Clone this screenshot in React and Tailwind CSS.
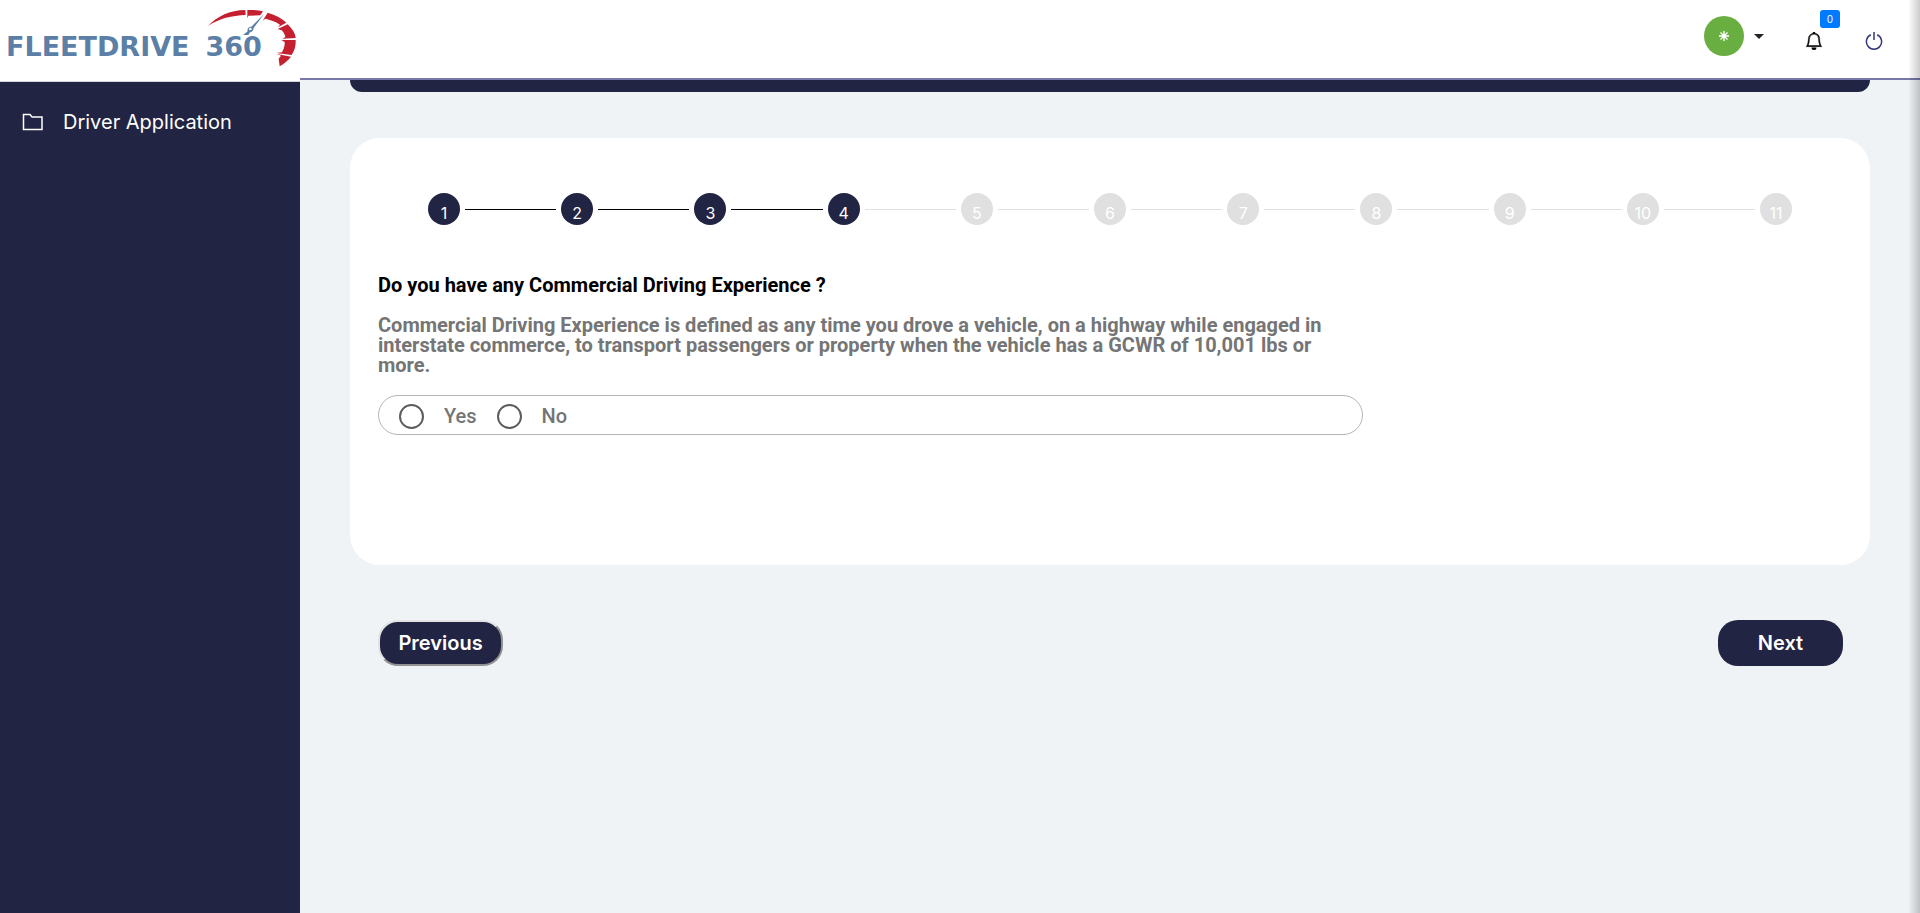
import React, { useState } from "react";
import { BsBell } from "react-icons/bs";

const STEPS = [1, 2, 3, 4, 5, 6, 7, 8, 9, 10, 11];
const CURRENT_STEP = 4;

function Logo() {
  return (
    <a href="#home" aria-label="FleetDrive 360" className="relative block h-[82px] border-b border-[#d3d3da] bg-white">
      <span className="flex gap-4 pt-[33px] pl-[6px] font-['DejaVu_Sans'] text-[27px] leading-7 font-bold whitespace-nowrap text-[#5b7fa6]">
        <span>FLEETDRIVE</span>
        <span>360</span>
      </span>
      <svg className="absolute top-0 left-[200px]" width="100" height="75" viewBox="0 0 300 225" aria-hidden="true">
        <g fill="#c4202f">
          <path d="M24 78 C52 48 90 31 136 30 L137 45 C96 47 58 55 24 78 Z" />
          <path d="M142 30 C160 29 176 31 189 34 L181 46 L145 47 L142 55 Z" />
          <path d="M203 38 C228 45 246 55 259 68 L234 82 L240 74 C226 64 210 60 196 56 L188 62 Z" />
          <path d="M263 73 C277 87 286 100 287 114 L247 116 L256 111 C254 102 250 96 245 91 L233 87 Z" />
          <path d="M287 120 C288 137 284 152 275 165 L229 159 L246 157 C253 145 255 133 254 126 L244 120 Z" />
          <path d="M273 170 C263 183 251 191 239 199 L236 176 L243 167 L231 162 Z" />
        </g>
        <path d="M193 41 L161 84 C161 92 155 96 150 97 L145 105 H129 L143 94 C140 86 147 79 154 80 Z" fill="#5b7fa6" />
        <circle cx="151" cy="87" r="4" fill="#fff" />
      </svg>
    </a>
  );
}

function Sidebar() {
  return (
    <aside className="flex w-[300px] shrink-0 flex-col bg-[#212443]">
      <Logo />
      <nav className="pt-6">
        <a href="#driver-application" className="flex h-8 items-center gap-5 pl-[22px] text-xl text-white">
          <svg width="21" height="18" viewBox="0 0 21 18" fill="none" stroke="currentColor" strokeWidth="1.5" aria-hidden="true">
            <path d="M1.5 1.5 H8 L10 4 H20 V16.5 H1.5 Z" />
          </svg>
          Driver Application
        </a>
      </nav>
    </aside>
  );
}

function Header() {
  return (
    <header className="flex h-20 items-start justify-end border-b-2 border-[#7878a8] bg-white pr-[37px]">
      <button type="button" aria-label="Account menu" className="mt-4 flex items-center gap-2.5">
        <span className="flex size-10 items-center justify-center rounded-full bg-[#69ae41] text-white">
          <svg width="10" height="10" viewBox="0 0 10 10" stroke="currentColor" strokeWidth="1.4" aria-hidden="true">
            <path d="M5 0 V10 M0 5 H10 M1.5 1.5 L8.5 8.5 M8.5 1.5 L1.5 8.5" />
          </svg>
        </span>
        <svg width="10" height="5" viewBox="0 0 10 5" aria-hidden="true">
          <path d="M0 0 H10 L5 5 Z" fill="#212529" />
        </svg>
      </button>
      <button type="button" aria-label="Notifications" className="relative mt-8 ml-[41px] text-black">
        <BsBell size={18} stroke="currentColor" strokeWidth={0.4} />
        <span className="absolute -top-[22px] left-[15px] flex h-[18px] w-5 items-center justify-center rounded-[3px] bg-[#007bff] text-[10px] text-white">
          0
        </span>
      </button>
      <button type="button" aria-label="Sign out" className="mt-8 ml-[42px] text-[#36367c]">
        <svg width="18" height="18" viewBox="0 0 18 18" fill="none" stroke="currentColor" strokeWidth="1.5" aria-hidden="true">
          <path d="M9 0 V8 M5.8 2.7 A7.6 7.6 0 1 0 12.2 2.7" />
        </svg>
      </button>
    </header>
  );
}

function Stepper() {
  return (
    <ol className="flex items-center px-[50px]">
      {STEPS.map((step, i) => (
        <li key={step} className={i < STEPS.length - 1 ? "flex flex-1 items-center" : "flex items-center"}>
          <span
            className={
              "flex size-8 shrink-0 items-center justify-center rounded-full pt-2 text-base leading-6 text-white " +
              (step <= CURRENT_STEP ? "bg-[#212443]" : "bg-[#e0e0e0]")
            }
          >
            {step}
          </span>
          {i < STEPS.length - 1 && (
            <span className={"mx-[5px] h-px flex-1 " + (step < CURRENT_STEP ? "bg-black" : "bg-[#e0e0e0]")} />
          )}
        </li>
      ))}
    </ol>
  );
}

function Question() {
  const [answer, setAnswer] = useState("");
  return (
    <fieldset className="mt-[50px] max-w-[985px] font-[Roboto,sans-serif] text-xl leading-5">
      <legend className="font-bold text-black">Do you have any Commercial Driving Experience ?</legend>
      <p className="mt-5 font-bold text-[#757575]">
        Commercial Driving Experience is defined as any time you drove a vehicle, on a highway while engaged in
        interstate commerce, to transport passengers or property when the vehicle has a GCWR of 10,001 lbs or more.
      </p>
      <div className="mt-5 flex h-10 items-center gap-5 rounded-[20px] border border-[#b5b5b5] pt-0.5 pl-5 font-medium text-[#757575]">
        {["Yes", "No"].map((option) => (
          <label key={option} className="flex items-center gap-5">
            <input
              type="radio"
              name="experience"
              value={option}
              checked={answer === option}
              onChange={() => setAnswer(option)}
              className="size-[25px] appearance-none rounded-full border-2 border-[#5c5c5c] checked:bg-[#212443]"
            />
            {option}
          </label>
        ))}
      </div>
    </fieldset>
  );
}

export default function App() {
  return (
    <div className="flex min-h-screen bg-[#eff3f6] font-[Inter,sans-serif]">
      <Sidebar />
      <div className="flex min-w-0 flex-1 flex-col">
        <Header />
        <main className="px-[50px]">
          <div className="h-3 rounded-b-xl bg-[#212443]" />
          <section className="mt-[46px] min-h-[427px] rounded-[30px] bg-white px-7 pt-[55px]">
            <Stepper />
            <Question />
          </section>
          <div className="mt-[55px] flex justify-between pr-[27px] pl-7 text-xl font-semibold text-white">
            <button
              type="button"
              className="h-[46px] w-[125px] rounded-[20px] border-2 border-t-[#e3e3e3] border-r-[#929292] border-b-[#929292] border-l-[#e3e3e3] bg-[#212443]"
            >
              Previous
            </button>
            <button type="button" className="h-[46px] w-[125px] rounded-[20px] bg-[#212443]">
              Next
            </button>
          </div>
        </main>
      </div>
      <div className="pointer-events-none fixed inset-y-0 right-0 w-3 bg-linear-to-r from-transparent to-black/20" />
    </div>
  );
}
